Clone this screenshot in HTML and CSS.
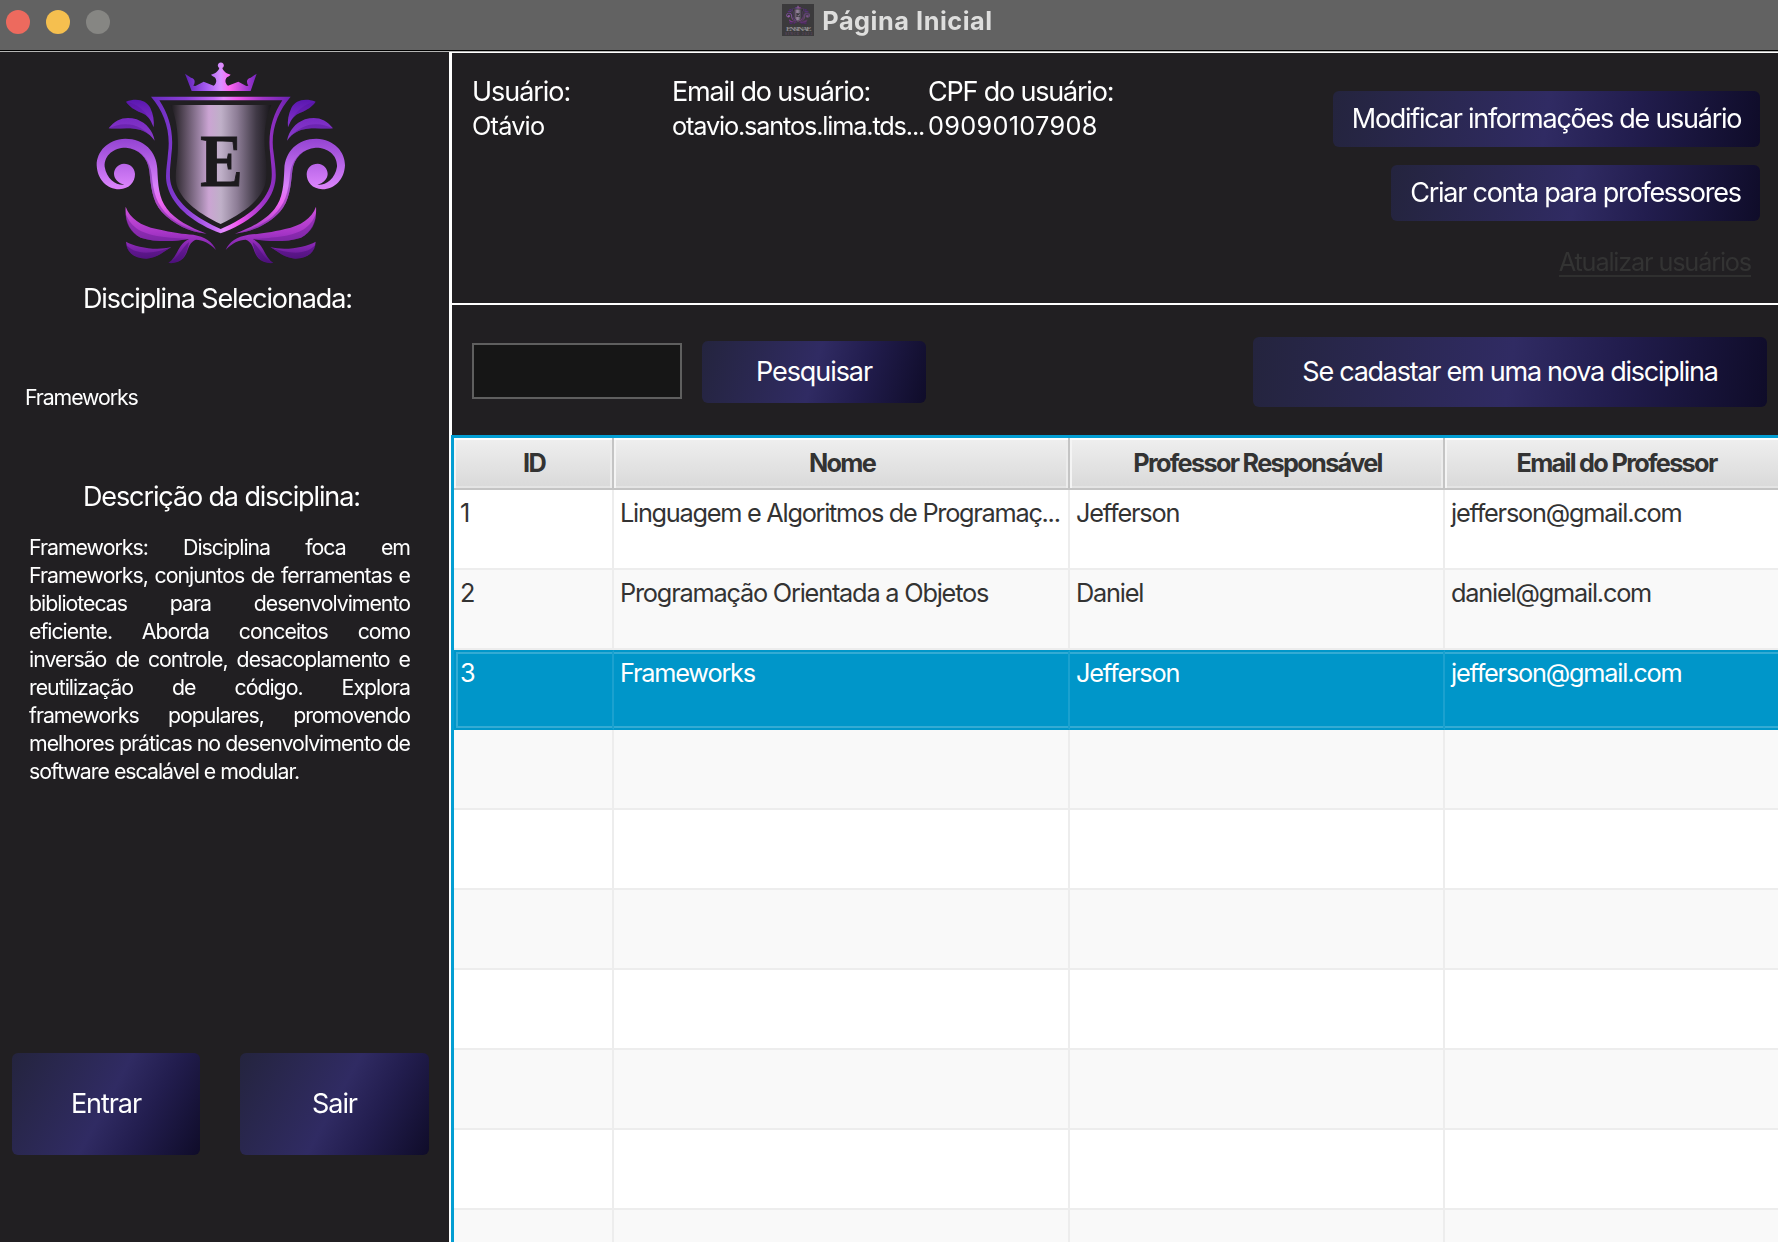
FILE: index.html
```html
<!DOCTYPE html>
<html lang="pt-BR">
<head>
<meta charset="utf-8">
<title>Página Inicial</title>
<link rel="stylesheet" href="styles.css">
</head>
<body>
<header class="titlebar">
  <div class="lights"><span class="light red"></span><span class="light yellow"></span><span class="light gray"></span></div>
  <div class="title">
    <svg class="app-icon" viewBox="0 0 32 32">
      <rect width="32" height="32" fill="#3b3a3c"/>
      <svg x="4" y="1" width="24" height="20" viewBox="40 30 765 620" opacity=".65"><use href="#crest"/></svg>
      <text x="4" y="27" font-size="6" textLength="24" lengthAdjust="spacingAndGlyphs" font-family="Liberation Serif, serif" font-weight="700" fill="#8f8d90">ENSINAE</text>
      <text x="3" y="31" font-size="3.6" textLength="26" lengthAdjust="spacing" font-family="Liberation Serif, serif" fill="#6b4a72">SINCE 2023</text>
    </svg>
    <h1>Página Inicial</h1>
  </div>
</header>
<div class="window">
  <aside class="sidebar">
    <svg class="logo" viewBox="0 6 840 654">
      <defs>
        <linearGradient id="band" gradientUnits="userSpaceOnUse" x1="213" y1="0" x2="632" y2="0">
          <stop offset="0" stop-color="#6a2bc0"/><stop offset=".25" stop-color="#8a3fd6"/><stop offset=".45" stop-color="#c46cf5"/><stop offset=".52" stop-color="#e68cff"/><stop offset=".62" stop-color="#f25af0"/><stop offset=".8" stop-color="#a035c8"/><stop offset="1" stop-color="#6a22b0"/>
        </linearGradient>
        <linearGradient id="crown" gradientUnits="userSpaceOnUse" x1="315" y1="0" x2="530" y2="0">
          <stop offset="0" stop-color="#5f1fb4"/><stop offset=".3" stop-color="#a65cf0"/><stop offset=".5" stop-color="#d990ff"/><stop offset=".62" stop-color="#ff66f2"/><stop offset="1" stop-color="#7424bd"/>
        </linearGradient>
        <linearGradient id="steel" gradientUnits="userSpaceOnUse" x1="272" y1="0" x2="574" y2="0">
          <stop offset="0" stop-color="#1c1a1d"/><stop offset=".08" stop-color="#3f3641"/><stop offset=".3" stop-color="#a288ab"/><stop offset=".38" stop-color="#cba4d3"/><stop offset=".5" stop-color="#bfb0c8"/><stop offset=".66" stop-color="#8d7d96"/><stop offset=".85" stop-color="#403946"/><stop offset="1" stop-color="#18161a"/>
        </linearGradient>
        <linearGradient id="scroll" gradientUnits="userSpaceOnUse" x1="0" y1="265" x2="0" y2="550">
          <stop offset="0" stop-color="#9343d2"/><stop offset=".5" stop-color="#d882fa"/><stop offset=".68" stop-color="#ee66f2"/><stop offset="1" stop-color="#a238c4"/>
        </linearGradient>
        <linearGradient id="leafTop" gradientUnits="userSpaceOnUse" x1="0" y1="148" x2="0" y2="270">
          <stop offset="0" stop-color="#5a17b0"/><stop offset=".5" stop-color="#7a2cc4"/><stop offset="1" stop-color="#8a3cc8"/>
        </linearGradient>
        <linearGradient id="leafLow" gradientUnits="userSpaceOnUse" x1="0" y1="470" x2="0" y2="642">
          <stop offset="0" stop-color="#cf52dc"/><stop offset=".45" stop-color="#a836c8"/><stop offset=".75" stop-color="#7a22a8"/><stop offset="1" stop-color="#4a1078"/>
        </linearGradient>
        <g id="wing">
          <path fill="url(#leafTop)" d="M138 155C170 143 199 150 211 174C220 193 223 212 221 232C211 206 202 195 184 188C162 179 150 171 138 155Z"/>
          <path fill="#4f1296" opacity=".3" d="M138 155C168 162 196 174 221 232C211 206 202 195 184 188C162 179 150 171 138 155Z"/>
          <path fill="url(#leafTop)" d="M86 235C108 205 138 198 170 208C200 220 218 242 224 272C205 246 187 239 163 236C136 233 112 237 86 235Z"/>
          <path fill="#5a1a9c" opacity=".5" d="M86 235C124 216 180 212 224 272C205 246 187 239 163 236C136 233 112 237 86 235Z"/>
          <path fill="url(#scroll)" d="M133 404C110 407 80 388 74 350C72 314 104 292 138 293C176 297 203 322 208 362C213 409 216 452 245 485C280 523 330 546 380 551C330 532 285 508 261 476C236 445 234 402 232 357C230 304 192 266 136 266C82 268 50 305 50 346C52 388 80 418 118 418C148 416 165 397 165 372C164 353 150 341 132 341C114 342 102 355 102 372C103 388 115 400 133 404Z"/>
          <path fill="#6d2a9c" opacity=".5" d="M150 295C188 305 210 332 215 374C220 425 228 462 268 500C300 526 340 542 380 551C330 546 280 523 245 485C216 452 213 409 208 362C203 325 182 304 150 295Z"/>
          <path fill="url(#leafLow)" d="M137 470C150 505 182 527 230 537C280 549 310 552 340 554C374 560 398 575 408 600C388 578 368 570 348 569C332 574 326 590 321 606C313 628 294 642 265 639C284 626 290 606 302 588C309 578 318 571 327 567C286 575 225 577 182 563C148 545 134 512 137 470Z"/>
          <path fill="#6b1f96" opacity=".5" d="M137 490C152 536 192 554 246 560C280 564 310 566 327 567C286 575 225 577 182 563C150 548 136 520 137 490Z"/>
          <path fill="#4a1078" opacity=".5" d="M265 639C293 630 300 600 327 576C321 606 315 637 265 639Z"/>
          <path fill="url(#leafLow)" d="M138 575C168 592 230 603 274 591C248 606 236 623 199 626C158 624 140 604 138 575Z"/>
          <path fill="#4a1078" opacity=".55" d="M138 583C158 612 212 617 274 591C248 606 236 623 199 626C158 624 140 604 138 583Z"/>
        </g>
        <g id="crest">
          <path fill="url(#crown)" d="M315 71L333 83C345 85 347 96 340 107L346 108L371 95L401 107C409 101 411 92 406 84C402 78 397 80 393 74C404 71 414 66 418 54A9 9 0 1 1 427 54C431 66 441 71 452 74C448 80 443 78 439 84C434 92 436 101 444 107L475 95L499 108L505 107C498 96 500 85 512 83L530 71L512 123H335Z"/>
          <path fill="url(#band)" fill-rule="evenodd" d="M213 140H632C592 186 570 245 581 310C585 345 592 378 583 408C566 474 498 522 422 550C347 522 279 474 262 408C253 378 262 345 264 310C273 245 253 186 213 140ZM238 151C268 198 283 248 274 314C272 345 266 372 273 403C290 464 354 507 422 537C491 507 555 464 572 403C579 372 573 345 571 314C562 248 577 198 607 151Z"/>
          <path fill="url(#steel)" d="M272 165H574C556 205 549 255 556 312C560 345 562 378 555 405C538 456 484 493 422 522C361 493 307 456 290 405C283 378 291 345 293 312C296 255 290 205 272 165Z"/>
          <text x="361" y="407" font-family="Liberation Serif, serif" font-weight="700" font-size="219" textLength="126" lengthAdjust="spacingAndGlyphs" fill="#1c1a1d" stroke="#1c1a1d" stroke-width="3">E</text>
          <use href="#wing"/>
          <use href="#wing" transform="translate(845 0) scale(-1 1)"/>
        </g>
      </defs>
      <use href="#crest"/>
    </svg>
    <h2 class="heading">Disciplina Selecionada:</h2>
    <p class="selected">Frameworks</p>
    <h2 class="heading">Descrição da disciplina:</h2>
    <p class="description">
      <span>Frameworks: Disciplina foca em</span>
      <span>Frameworks, conjuntos de ferramentas e</span>
      <span>bibliotecas para desenvolvimento</span>
      <span>eficiente. Aborda conceitos como</span>
      <span>inversão de controle, desacoplamento e</span>
      <span>reutilização de código. Explora</span>
      <span>frameworks populares, promovendo</span>
      <span>melhores práticas no desenvolvimento de</span>
      <span>software escalável e modular.</span>
    </p>
    <div class="actions">
      <button class="btn enter">Entrar</button>
      <button class="btn leave">Sair</button>
    </div>
  </aside>
  <main class="main">
    <section class="user">
      <dl class="info">
        <div class="field"><dt class="looser">Usuário:</dt><dd class="name">Otávio</dd></div>
        <div class="field"><dt>Email do usuário:</dt><dd>otavio.santos.lima.tds...</dd></div>
        <div class="field"><dt>CPF do usuário:</dt><dd class="digits">09090107908</dd></div>
      </dl>
      <div class="user-actions">
        <button class="btn modify">Modificar informações de usuário</button>
        <button class="btn create">Criar conta para professores</button>
        <a class="refresh">Atualizar usuários</a>
      </div>
    </section>
    <section class="toolbar">
      <input class="search" type="text">
      <button class="btn find">Pesquisar</button>
      <button class="btn enroll">Se cadastar em uma nova disciplina</button>
    </section>
    <section class="table">
      <div class="row head"><div>ID</div><div>Nome</div><div>Professor Responsável</div><div>Email do Professor</div></div>
      <div class="row"><div>1</div><div class="clipped">Linguagem e Algoritmos de Programaç...</div><div>Jefferson</div><div>jefferson@gmail.com</div></div>
      <div class="row even"><div>2</div><div>Programação Orientada a Objetos</div><div>Daniel</div><div>daniel@gmail.com</div></div>
      <div class="row active"><div>3</div><div>Frameworks</div><div>Jefferson</div><div>jefferson@gmail.com</div></div>
      <div class="row even"><div></div><div></div><div></div><div></div></div>
      <div class="row"><div></div><div></div><div></div><div></div></div>
      <div class="row even"><div></div><div></div><div></div><div></div></div>
      <div class="row"><div></div><div></div><div></div><div></div></div>
      <div class="row even"><div></div><div></div><div></div><div></div></div>
      <div class="row"><div></div><div></div><div></div><div></div></div>
      <div class="row even"><div></div><div></div><div></div><div></div></div>
    </section>
  </main>
</div>
</body>
</html>
```

FILE: styles.css
```css
* { box-sizing: border-box; margin: 0; padding: 0; }

body {
  height: 1242px;
  overflow: hidden;
  display: flex;
  flex-direction: column;
  background: #211f22;
  color: #fff;
  font-family: Inter, "Liberation Sans", sans-serif;
  font-size: 27px;
  line-height: 34px;
  letter-spacing: -1.2px;
}

.titlebar {
  flex: none;
  height: 52px;
  display: grid;
  grid-template-columns: 1fr auto 1fr;
  background: #626262;
  border-bottom: 1px solid #b5b5b5;
  box-shadow: inset 0 -1px #000;
}
.lights { display: flex; gap: 16px; padding: 10px 0 0 6px; }
.light { width: 24px; height: 24px; border-radius: 50%; }
.red { background: #ed6a5e; }
.yellow { background: #f5bf4f; }
.gray { background: #868683; }
.title { display: flex; gap: 8px; padding: 4px 3px 0 0; }
.app-icon { width: 32px; height: 32px; }
.title h1 { color: #dededd; font-size: 25.3px; font-weight: 700; letter-spacing: .53px; line-height: 34px; }

.window { flex: 1; min-height: 0; display: flex; }

.sidebar { flex: none; width: 449px; display: flex; flex-direction: column; }
.logo { display: block; flex: none; width: 280px; height: 218px; margin-left: 80px; }
.heading { font-size: 27px; font-weight: 400; letter-spacing: -1.12px; margin: 12px 0 0 83px; }
.selected { font-size: 21.3px; line-height: 28px; letter-spacing: -1.1px; margin: 67px 0 57px 25px; }
.description { font-size: 21.3px; line-height: 28px; letter-spacing: -1px; width: 381px; margin: 19px 0 0 29px; }
.description span { display: block; white-space: nowrap; text-align: justify; text-align-last: justify; }
.description span:last-child { text-align-last: left; }
.actions { display: flex; gap: 40px; margin: 268px 0 0 12px; }

.btn {
  display: block;
  border: 0;
  border-radius: 6px;
  color: #fff;
  font: inherit;
  letter-spacing: -1.26px;
  white-space: nowrap;
  background: linear-gradient(var(--slope), #24243e, #302b63 50%, #221d4e 70%, #0f0c29);
}
.enter, .leave { --slope: 118.5deg; height: 102px; letter-spacing: -1.07px; }
.enter { width: 188px; }
.leave { width: 189px; }

.main {
  flex: 1;
  min-width: 0;
  display: flex;
  flex-direction: column;
  border-left: 3px solid #fff;
}
.user {
  flex: none;
  height: 253px;
  display: flex;
  justify-content: space-between;
  border-top: 1px solid #fff;
  border-bottom: 2px solid #fff;
}
.info { display: grid; grid-template-columns: 200px 256px 256px; padding: 22px 0 0 20px; }
.info dt.looser { letter-spacing: -1.05px; }
.info dd { font-size: 25.3px; line-height: 34px; letter-spacing: -1.16px; }
.info .name { letter-spacing: -.8px; }
.info .digits { letter-spacing: .3px; }
.user-actions { display: flex; flex-direction: column; align-items: flex-end; gap: 18px; padding: 38px 18px 0 0; }
.modify { --slope: 97.5deg; width: 427px; height: 56px; }
.create { --slope: 98.6deg; width: 369px; height: 56px; }
.refresh {
  margin: 6px 9px 0 0;
  height: 32px;
  border-bottom: 2px solid #2f2f2f;
  color: #333;
  font-size: 25.3px;
  letter-spacing: -1.18px;
}

.toolbar { flex: none; height: 130px; display: flex; align-items: center; padding: 4px 11px 0 20px; }
.search { width: 210px; height: 56px; margin: 0 20px 2px 0; border: 2px solid #5f5f5f; background: #161616; color: #fff; outline: 0; }
.find { --slope: 105.5deg; width: 224px; height: 62px; letter-spacing: -1.07px; }
.enroll { --slope: 97.8deg; width: 514px; height: 70px; margin-left: auto; }

.table {
  flex: 1;
  min-height: 0;
  overflow: hidden;
  margin-left: -1px;
  border-top: 3px solid #039ed3;
  border-left: 3px solid #039ed3;
  color: #333;
  font-size: 25.3px;
}
.row { display: grid; grid-template-columns: 160px 456px 375px 343px; width: 1334px; height: 80px; background: #fff; }
.row.even { background: #f9f9f9; }
.row > div { padding: 6px 6px 0; border-right: 2px solid #ededed; border-bottom: 2px solid #ededed; white-space: nowrap; }
.row > .clipped { letter-spacing: -1.26px; }
.head { height: 52px; font-weight: 700; letter-spacing: -1.7px; }
.row.head > div {
  padding: 8px 0 0 2px;
  text-align: center;
  border-right-color: #c4c4c4;
  border-bottom-color: #c4c4c4;
  background: linear-gradient(#efefef, #d9d9d9);
  box-shadow: inset 0 2px #fff, inset 2px 0 #f4f4f4, inset -2px 0 #ececec, inset 0 -2px #e4e4e4;
}
.row.active { background: #0096c9; color: #fff; }
.row.active > div {
  padding-top: 4px;
  border-top: 2px solid #0096c9;
  border-right-color: #1ba1cf;
  border-bottom-color: #0096c9;
  box-shadow: inset 0 2px #33abd4, inset 0 -2px #33abd4;
}
.row.active > div:first-child { border-left: 2px solid #0096c9; padding-left: 4px; box-shadow: inset 2px 2px #33abd4, inset 0 -2px #33abd4; }
```
